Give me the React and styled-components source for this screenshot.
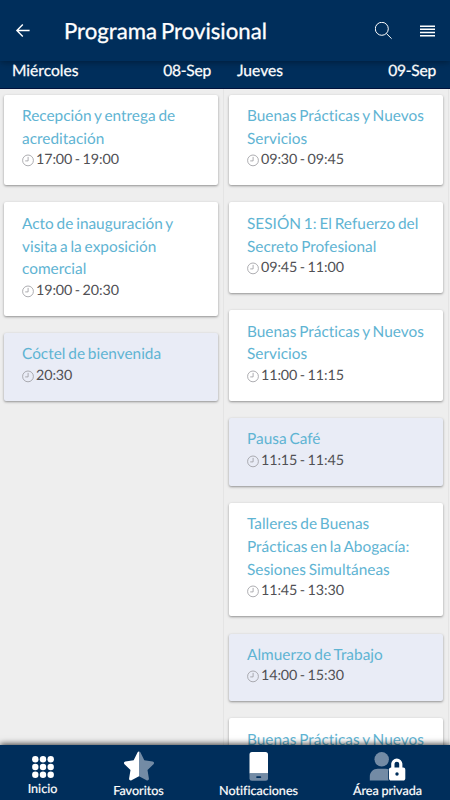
import React from 'react';
import styled, { createGlobalStyle } from 'styled-components';

const GlobalStyle = createGlobalStyle`
    * {
        box-sizing: border-box;
    }

    body {
        margin: 0;
        font-family: Lato, "Liberation Sans", sans-serif;
        font-variant-ligatures: none;
        text-rendering: geometricPrecision;
        background: #eeeeee;
    }
`;

const Screen = styled.div`
    display: flex;
    flex-direction: column;
    width: 450px;
    height: 800px;
    overflow: hidden;
    background: #eeeeee;
`;

const TopBar = styled.header`
    position: relative;
    z-index: 2;
    display: flex;
    align-items: center;
    flex: none;
    height: 61px;
    padding: 0 14px 0 15px;
    color: #fff;
    background: #002e5b;
    box-shadow: 0 1px 7px rgba(0, 0, 0, 0.4);
`;

const Title = styled.h1`
    flex: 1;
    margin: 0 0 0 33px;
    font-size: 22.2px;
    font-weight: 400;
    line-height: 30px;
    word-spacing: -1.7px;
    white-space: nowrap;
    -webkit-text-stroke: 0.3px #fff;
`;

const Actions = styled.div`
    display: flex;
    align-items: center;
    gap: 27px;
`;

const Columns = styled.main`
    display: flex;
    flex: 1;
    min-height: 0;
`;

const Column = styled.section`
    flex: 0 0 225px;
    min-width: 0;
`;

const DayBar = styled.div`
    display: flex;
    justify-content: space-between;
    height: 28px;
    padding: 0 14px 0 12px;
    color: #fff;
    font-size: 15.6px;
    line-height: 21px;
    background: #002e5b;
    border-bottom: 1px solid #00123c;
    -webkit-text-stroke: 0.25px #fff;
`;

const DayDate = styled.span`
    letter-spacing: -0.25px;
`;

const Sessions = styled.div`
    display: flex;
    flex-direction: column;
    gap: 17.4px;
    width: 224px;
    height: 100%;
    padding: 5.7px 5px 0 4px;
    border-right: 1px solid #e4e4e4;
`;

const Card = styled.article`
    flex: none;
    padding: 10.3px 17px 15.1px 18px;
    background: ${({ $break }) => ($break ? '#e9ecf6' : '#fff')};
    border-radius: 2px;
    box-shadow: 0 1px 2.5px rgba(0, 0, 0, 0.4);
`;

const CardTitle = styled.h2`
    margin: 0;
    color: #5fb4d3;
    font-size: 15.4px;
    font-weight: 400;
    line-height: 22.8px;
    word-spacing: -1.1px;
`;

const Time = styled.div`
    display: flex;
    align-items: center;
    gap: 2px;
    height: 19.4px;
    color: #505054;
    font-size: 14.3px;
    line-height: 18px;
    letter-spacing: -0.1px;
    word-spacing: -1px;
`;

const TabBar = styled.nav`
    position: relative;
    z-index: 2;
    display: flex;
    flex: none;
    height: 55px;
    color: #fff;
    background: #002e5b;
    box-shadow: 0 -1px 6px rgba(0, 0, 0, 0.75);
`;

const Tab = styled.div`
    display: flex;
    flex: 0 0 ${({ $width }) => $width}px;
    flex-direction: column;
    align-items: center;
    padding-top: ${({ $top }) => $top || 6}px;
`;

const TabLabel = styled.span`
    margin-top: 1.8px;
    font-size: 12.6px;
    line-height: 16px;
    word-spacing: -0.5px;
    white-space: nowrap;
    -webkit-text-stroke: 0.2px #fff;
`;

const BackIcon = () => (
    <svg width="16" height="16" viewBox="0 0 16 16" fill="none" stroke="#fff" strokeWidth="1.4">
        <path d="M14.6 7.5H2.2M7.8 1.5 1.9 7.5l5.9 6" />
    </svg>
);

const SearchIcon = () => (
    <svg width="18" height="18" viewBox="0 0 18 18" fill="none" stroke="#fff" strokeWidth="1">
        <circle cx="6.8" cy="6.8" r="6.5" />
        <path d="m11.4 11.5 5.2 5.2" />
    </svg>
);

const MenuIcon = () => (
    <svg width="16" height="12" viewBox="0 0 16 12" fill="#fff">
        <path d="M0 .4h15v1.5H0zM0 3.6h15v1.5H0zM0 6.8h15v1.5H0zM0 10h15v1.5H0z" />
    </svg>
);

const ClockIcon = () => (
    <svg width="12" height="14" viewBox="0 0 12 14" fill="none" stroke="#99999e" strokeWidth="0.8">
        <circle cx="6" cy="7.4" r="5.4" />
        <path d="M6.1 3.9v4H3.2" />
    </svg>
);

const GridIcon = () => (
    <svg width="22" height="23" viewBox="0 0 22 23" fill="#fff">
        {[3.3, 11, 18.7].map(y =>
            [3.3, 11, 18.7].map(x => (
                <circle key={`${x}-${y}`} cx={x} cy={y} r="3.2" />
            ))
        )}
    </svg>
);

const StarIcon = () => (
    <svg width="30" height="30" viewBox="0 0 30 30">
        <path
            fill="#fff"
            d="M15 .6c-.7 0-1.2.4-1.5 1L9.7 9.3l-8.3 1.2c-1.4.2-1.9 1.7-.9 2.7l6 5.9-1.4 8.4c-.2 1.4 1.2 2.4 2.4 1.8l7.5-4z"
        />
        <path
            fill="#738ba5"
            d="M15 .6c.7 0 1.2.4 1.5 1l3.8 7.7 8.3 1.2c1.4.2 1.9 1.7.9 2.7l-6 5.9 1.4 8.4c.2 1.4-1.2 2.4-2.4 1.8l-7.5-4z"
        />
    </svg>
);

const PhoneIcon = () => (
    <svg width="20" height="30" viewBox="0 0 20 30">
        <path fill="#fff" d="M3 .9h13.5a2.5 2.5 0 0 1 2.5 2.5v19.1H.5V3.4A2.5 2.5 0 0 1 3 .9z" />
        <path fill="#738ba5" d="M.5 22.5H19v4.7a2.5 2.5 0 0 1-2.5 2.5H3a2.5 2.5 0 0 1-2.5-2.5z" />
        <rect x="7.2" y="25.2" width="5" height="1.7" rx=".7" fill="#002e5b" />
    </svg>
);

const PrivateIcon = () => (
    <svg width="37" height="30" viewBox="0 0 37 30">
        <g fill="#738ba5">
            <circle cx="12.7" cy="8.3" r="7.2" />
            <path d="M.8 29.5v-3.8c0-4.7 3.4-8 8-8h7.7c1.3 0 2.4.3 3.4.9-.5.6-.7 1.3-.7 2.1v7c0 .7.2 1.3.6 1.8z" />
        </g>
        <path
            fill="#fff"
            fillRule="evenodd"
            d="M22.2 16.6v-3.4a5.6 5.6 0 0 1 11.2 0v3.4h.8c1.2 0 2.1.9 2.1 2.1v8.8c0 1.2-.9 2.1-2.1 2.1H22.1c-1.2 0-2.1-.9-2.1-2.1v-8.8c0-1.2.9-2.1 2.1-2.1zm3.3 0h4.7v-3.5a2.35 2.35 0 0 0-4.7 0z"
        />
        <circle cx="28" cy="23" r="1.7" fill="#002e5b" />
    </svg>
);

const days = [
    {
        name: 'Miércoles',
        date: '08-Sep',
        sessions: [
            { title: 'Recepción y entrega de acreditación', time: '17:00 - 19:00' },
            { title: 'Acto de inauguración y visita a la exposición comercial', time: '19:00 - 20:30' },
            { title: 'Cóctel de bienvenida', time: '20:30', isBreak: true }
        ]
    },
    {
        name: 'Jueves',
        date: '09-Sep',
        sessions: [
            { title: 'Buenas Prácticas y Nuevos Servicios', time: '09:30 - 09:45' },
            { title: 'SESIÓN 1: El Refuerzo del Secreto Profesional', time: '09:45 - 11:00' },
            { title: 'Buenas Prácticas y Nuevos Servicios', time: '11:00 - 11:15' },
            { title: 'Pausa Café', time: '11:15 - 11:45', isBreak: true },
            { title: 'Talleres de Buenas Prácticas en la Abogacía: Sesiones Simultáneas', time: '11:45 - 13:30' },
            { title: 'Almuerzo de Trabajo', time: '14:00 - 15:30', isBreak: true },
            { title: 'Buenas Prácticas y Nuevos', time: '' }
        ]
    }
];

const tabs = [
    { label: 'Inicio', icon: <GridIcon />, width: 85, top: 11 },
    { label: 'Favoritos', icon: <StarIcon />, width: 107 },
    { label: 'Notificaciones', icon: <PhoneIcon />, width: 133 },
    { label: 'Área privada', icon: <PrivateIcon />, width: 125 }
];

const App = () => (
    <>
        <GlobalStyle />
        <Screen>
            <TopBar>
                <BackIcon />
                <Title>Programa Provisional</Title>
                <Actions>
                    <SearchIcon />
                    <MenuIcon />
                </Actions>
            </TopBar>
            <Columns>
                {days.map(day => (
                    <Column key={day.name}>
                        <DayBar>
                            <span>{day.name}</span>
                            <DayDate>{day.date}</DayDate>
                        </DayBar>
                        <Sessions>
                            {day.sessions.map((session, i) => (
                                <Card key={i} $break={session.isBreak}>
                                    <CardTitle>{session.title}</CardTitle>
                                    <Time>
                                        <ClockIcon />
                                        {session.time}
                                    </Time>
                                </Card>
                            ))}
                        </Sessions>
                    </Column>
                ))}
            </Columns>
            <TabBar>
                {tabs.map(tab => (
                    <Tab key={tab.label} $width={tab.width} $top={tab.top}>
                        {tab.icon}
                        <TabLabel>{tab.label}</TabLabel>
                    </Tab>
                ))}
            </TabBar>
        </Screen>
    </>
);

export default App;
